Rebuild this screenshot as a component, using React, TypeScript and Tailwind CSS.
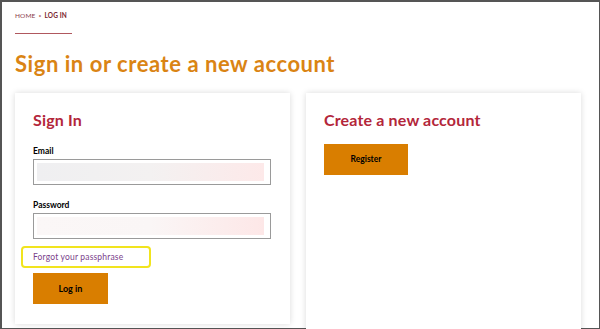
export default function App() {
    return (
        <div className="w-[600px] h-[329px] overflow-hidden bg-[#555] p-[2px] pr-[1px] pb-[1px] font-['Lato',sans-serif]">
            <div className="h-full w-full bg-white px-[13px] pt-[10px] flex flex-col">
                {/* Breadcrumb */}
                <div className="flex items-center gap-[3px] text-[6.5px] leading-[8px] uppercase tracking-[0.02em]">
                    <span className="text-[#8a3a4a]">Home</span>
                    <span className="text-[#c08080] text-[5px]">•</span>
                    <span className="text-[#7a1f2e] font-bold">Log in</span>
                </div>
                <div className="mt-[13px] w-[57px] h-0 border-t border-[#b0585e]" />

                <h1 className="mt-[17px] text-[22px] leading-[26px] font-bold text-[#da8414] tracking-[0.025em]">
                    Sign in or create a new account
                </h1>

                <div className="mt-[16px] grid grid-cols-[275px_275px] gap-[16px]">
                    {/* Sign in card */}
                    <div className="bg-white shadow-[0_0_6px_rgba(0,0,0,0.15)] h-[231px] px-[18px] pt-[17px]">
                        <h2 className="text-[16px] leading-[20px] font-bold text-[#b3263a] tracking-[0.01em]">Sign In</h2>

                        <label className="block mt-[16px] text-[8.5px] leading-[10px] font-bold text-black">Email</label>
                        <div className="mt-[3px] w-[238px] h-[26px] border border-[#9a9a9a] p-[3px] pr-[6px]">
                            <div className="h-full w-full bg-gradient-to-r from-[#efeff1] via-[#f3f1f1] to-[#fde9e9]" />
                        </div>

                        <label className="block mt-[15px] text-[8.5px] leading-[10px] font-bold text-black">Password</label>
                        <div className="mt-[3px] w-[238px] h-[26px] border border-[#9a9a9a] p-[3px] pr-[6px]">
                            <div className="h-full w-full bg-gradient-to-r from-[#fbf7f7] via-[#faf6f6] to-[#fde7e7]" />
                        </div>

                        <div className="mt-[7px] -ml-[12px] w-[130px] h-[22px] border-2 border-[#f1e41e] rounded-[4px] flex items-center pl-[10px]">
                            <a href="#" className="text-[8.5px] leading-[10px] text-[#7b3f8c] tracking-[0.02em]">Forgot your passphrase</a>
                        </div>

                        <button className="mt-[5px] w-[75px] h-[31px] bg-[#d97e00] text-[9px] font-bold text-black">
                            Log in
                        </button>
                    </div>

                    {/* Register card */}
                    <div className="bg-white shadow-[0_0_6px_rgba(0,0,0,0.15)] h-[240px] px-[18px] pt-[17px]">
                        <h2 className="text-[16px] leading-[20px] font-bold text-[#b3263a] tracking-[0.01em]">Create a new account</h2>
                        <button className="mt-[14px] w-[84px] h-[31px] bg-[#d97e00] text-[8.5px] font-bold text-black">
                            Register
                        </button>
                    </div>
                </div>
            </div>
        </div>
    );
}
